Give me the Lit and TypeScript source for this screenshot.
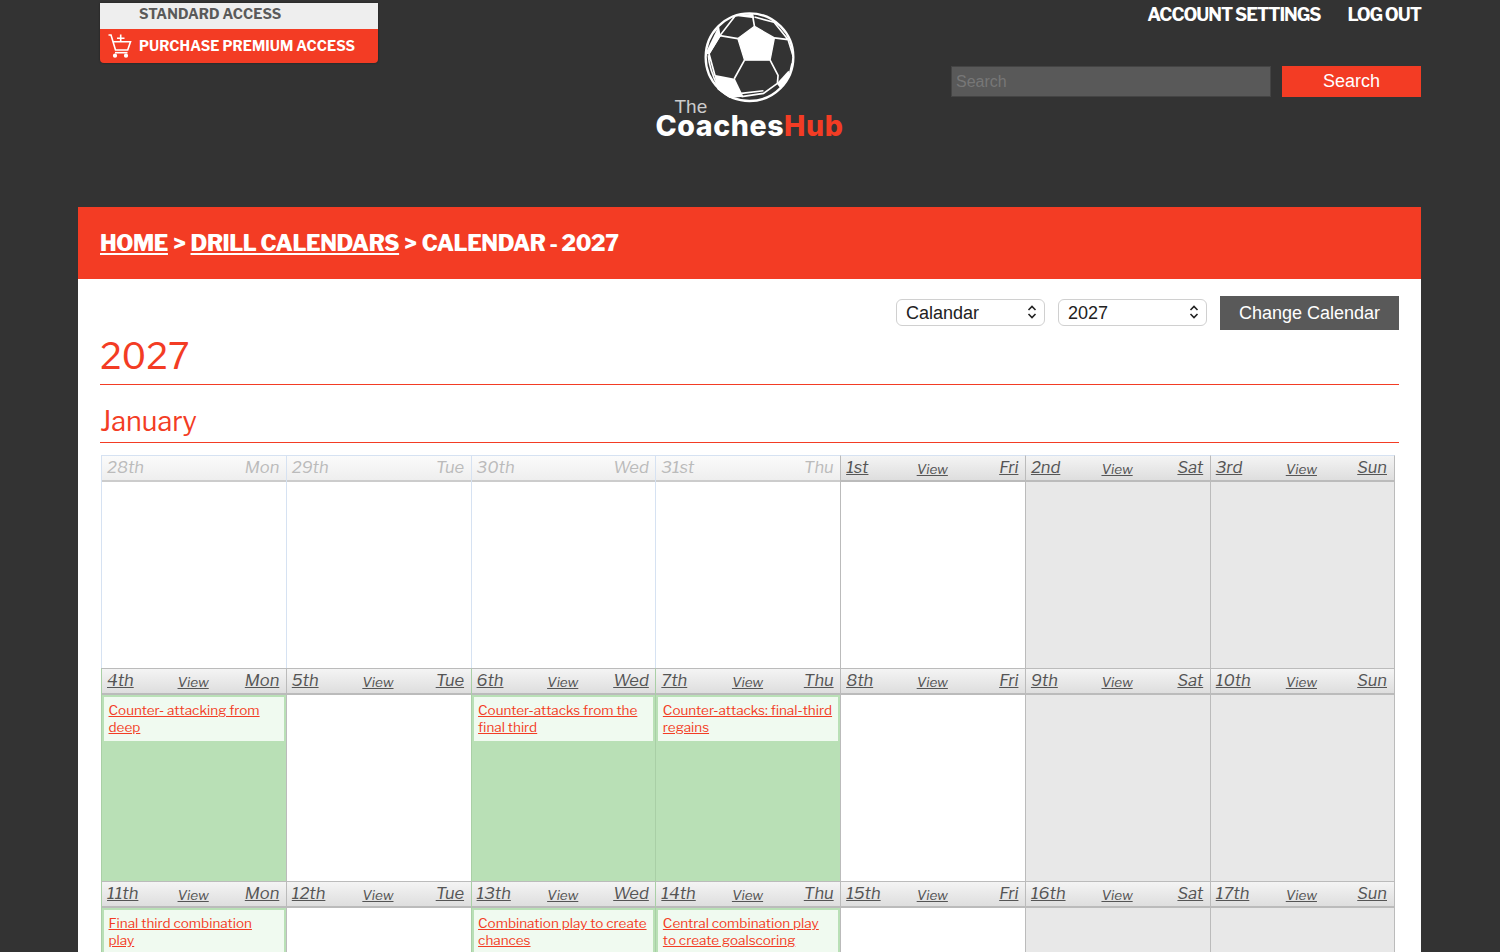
import { LitElement, html, css, svg } from 'lit';
import { customElement } from 'lit/decorators.js';

type Cell = { num: string; day: string; past?: boolean; tone?: 'green' | 'grey'; event?: string };

const DAYS = ['Mon', 'Tue', 'Wed', 'Thu', 'Fri', 'Sat', 'Sun'];

function week(nums: string[], events: (string | null)[], pastCount = 0): Cell[] {
  return nums.map((num, i) => ({
    num,
    day: DAYS[i],
    past: i < pastCount,
    tone: events[i] ? 'green' : i >= 5 ? 'grey' : undefined,
    event: events[i] ?? undefined,
  }));
}

const CELLS: Cell[] = [
  ...week(['28th', '29th', '30th', '31st', '1st', '2nd', '3rd'], [null, null, null, null, null, null, null], 4),
  ...week(['4th', '5th', '6th', '7th', '8th', '9th', '10th'], [
    'Counter- attacking from deep',
    null,
    'Counter-attacks from the final third',
    'Counter-attacks: final-third regains',
    null,
    null,
    null,
  ]),
  ...week(['11th', '12th', '13th', '14th', '15th', '16th', '17th'], [
    'Final third combination play',
    null,
    'Combination play to create chances',
    'Central combination play to create goalscoring opportunities',
    null,
    null,
    null,
  ]),
];

const ball = svg`
  <svg class="ball" viewBox="190 32 280 280" aria-hidden="true">
    <circle cx="330" cy="171" r="132" fill="none" stroke="#fff" stroke-width="7"/>
    <path fill="#fff" stroke="#fff" stroke-width="4" stroke-linejoin="round" d="M345 78 L405 113 L392 180 L315 180 L295 115 Z"/>
    <path fill="#fff" d="M196 162 L238 76 L243 108 L210 162 Z"/>
    <path fill="#fff" d="M224 224 L286 236 L312 290 L270 294 L234 268 Z"/>
    <path fill="#fff" d="M412 250 L447 212 L454 222 L424 266 Z"/>
    <path fill="#fff" d="M282 46 L340 40 L344 54 Z"/>
    <path fill="none" stroke="#fff" stroke-width="5" d="M345 78 L339 44 M295 115 L241 106 L286 48 M241 106 L208 160 L226 226 M315 180 L284 236 M392 180 L416 226 L414 250 M405 113 L446 118 L462 170 M446 118 L404 66 M306 290 L372 280 L414 250 M206 165 Q208 205 236 262 M345 50 L404 66 M305 280 L372 272 M452 216 L458 190"/>
  </svg>
`;

@customElement('app-root')
export class AppRoot extends LitElement {
  static styles = css`
    :host {
      display: block;
      height: 952px;
      overflow: hidden;
      background: #333;
      font-family: 'Liberation Sans', Arial, sans-serif;
    }
    .page { width: 1343px; margin-left: 78px; }

    .header {
      height: 207px;
      display: grid;
      grid-template-columns: 1fr auto 1fr;
    }
    .access {
      width: 278px;
      margin: 3px 0 0 22px;
      align-self: start;
      font-family: 'Libre Franklin', 'Roboto', sans-serif;
      font-weight: 700;
      font-size: 14px;
      letter-spacing: 0.08px;
      box-shadow: 0 0 2px rgba(0, 0, 0, 0.5);
      border-radius: 0 0 4px 4px;
    }
    .standard {
      box-sizing: border-box;
      height: 26px;
      padding: 0 0 5px 39px;
      display: flex;
      align-items: center;
      background: #eee;
      color: #5a5a5a;
    }
    .premium {
      box-sizing: border-box;
      height: 34px;
      display: flex;
      align-items: center;
      gap: 7px;
      padding: 0 0 1px 8px;
      background: #f33c24;
      color: #fff;
      border-radius: 0 0 4px 4px;
    }
    .cart { width: 24px; height: 24px; }

    .logo {
      display: flex;
      flex-direction: column;
      align-items: center;
      padding-top: 11px;
    }
    .ball { width: 93px; height: 93px; display: block; }
    .the {
      align-self: flex-start;
      margin: -4px 0 0 19px;
      color: #ccc;
      font-size: 19px;
      line-height: 14px;
    }
    .brand {
      font-family: 'Inter', sans-serif;
      font-weight: 800;
      font-size: 28.500px;
      line-height: 24px;
      letter-spacing: 0.6px;
      color: #fff;
    }
    .brand span { color: #f33c24; }

    .account { display: flex; flex-direction: column; align-items: flex-end; }
    .account-links {
      display: flex;
      gap: 27px;
      margin-top: 5px;
      font-family: 'Libre Franklin', 'Roboto', sans-serif;
      font-weight: 700;
      font-size: 18px;
      line-height: 20px;
      letter-spacing: -1px;
      color: #fff;
    }
    .search { display: flex; gap: 11px; margin-top: 41px; }
    .search input {
      box-sizing: border-box;
      width: 320px;
      height: 31px;
      padding: 0 4px;
      border: 1px solid #444;
      background: #595959;
      font: 16px 'Liberation Sans', Arial, sans-serif;
      color: #fff;
      outline: none;
    }
    .search input::placeholder { color: #777; }
    .search button {
      width: 139px;
      height: 31px;
      border: none;
      background: #f33c24;
      color: #fff;
      font: 18px 'Liberation Sans', Arial, sans-serif;
    }

    .crumbs {
      box-sizing: border-box;
      height: 72px;
      padding: 0 0 1px 22px;
      display: flex;
      align-items: center;
      gap: 5px;
      background: #f33c24;
      color: #fff;
      font-family: 'Libre Franklin', 'Roboto', sans-serif;
      font-weight: 800;
      font-size: 22px;
      letter-spacing: -0.4px;
    }
    .crumbs a { color: #fff; text-decoration: underline; }

    .content { background: #fff; padding: 17px 22px 0; height: 700px; }
    .controls { display: flex; justify-content: flex-end; align-items: center; height: 34px; }
    .select { position: relative; margin: 0 13px 1px 0; }
    .select select {
      appearance: none;
      width: 149px;
      height: 27px;
      display: block;
      padding: 0 9px;
      border: 1.5px solid #d0d0d0;
      border-radius: 6px;
      background: #fff;
      color: #222;
      font: 18px 'Liberation Sans', Arial, sans-serif;
    }
    .chev {
      position: absolute;
      right: 8px;
      top: 6px;
      width: 10px;
      height: 14px;
      pointer-events: none;
    }
    .change {
      width: 179px;
      height: 34px;
      border: none;
      background: #595959;
      color: #fff;
      font: 18px 'Liberation Sans', Arial, sans-serif;
    }

    h1, h2 { margin: 0; font-weight: 400; color: #f33c24; font-family: 'Libre Franklin', 'Roboto', sans-serif; border-bottom: 1px solid #f33c24; }
    h1 { font-size: 36px; line-height: 52px; padding-bottom: 2px; }
    h2 { font-size: 27px; line-height: 40px; margin-top: 17px; }

    .cal {
      width: 1293.500px;
      margin: 12px 0 0 1px;
      display: grid;
      grid-template-columns: repeat(7, 1fr);
      grid-auto-rows: 213px;
    }
    .cell {
      box-sizing: border-box;
      display: flex;
      flex-direction: column;
      border-left: 1px solid #bbb;
      border-top: 1px solid #bbb;
      font-family: 'Libre Franklin', 'Roboto', sans-serif;
    }
    .cell:nth-child(7n) { border-right: 1px solid #bbb; }
    .cell.past { border-color: #d6e2f2; }
    .cell.first-row { border-top-color: #d6e2f2; }
    .cell.green { background: #b9e0b6; border-left-color: #a9cfa6; }
    .cell.grey { background: #e8e8e8; }
    .day-head {
      box-sizing: border-box;
      height: 26px;
      padding: 0 6.500px 1.500px 5px;
      display: grid;
      grid-template-columns: 1fr auto 1fr;
      align-items: center;
      background: linear-gradient(#f4f4f4, #dedede);
      border-bottom: 2px solid #bbb;
      color: #555;
      font-size: 16.500px;
      font-style: italic;
    }
    .day-head a { color: #555; text-decoration: underline; }
    .day-head .view { font-size: 13.500px; padding-top: 3px; }
    .day-head .dow { text-align: right; }
    .past .day-head {
      background: linear-gradient(#fbfbfb, #eee);
      border-bottom-color: #ccc;
      color: #bbb;
    }
    .event {
      margin: 2px;
      padding: 5px 4px 5px 4.500px;
      background: #f0faf0;
      font-size: 13.500px;
      line-height: 17px;
    }
    .event a { color: #f33c24; text-decoration: underline; }
  `;

  private renderCell(c: Cell, i: number) {
    const classes = ['cell', c.past ? 'past' : '', c.tone ?? '', i < 7 ? 'first-row' : ''].join(' ');
    return html`
      <div class=${classes}>
        <div class="day-head">
          ${c.past
            ? html`<span>${c.num}</span><span></span><span class="dow">${c.day}</span>`
            : html`<span><a href="#">${c.num}</a></span>
                <a class="view" href="#">View</a>
                <span class="dow"><a href="#">${c.day}</a></span>`}
        </div>
        ${c.event ? html`<div class="event"><a href="#">${c.event}</a></div>` : ''}
      </div>
    `;
  }

  render() {
    return html`
      <div class="page">
        <header class="header">
          <div class="access">
            <div class="standard">STANDARD ACCESS</div>
            <div class="premium">
              <svg class="cart" viewBox="0 0 24 24" fill="none" stroke="#fff" stroke-width="1.600">
                <path d="M0.500 1 H3 L7.500 16 H19.700 L22.500 7.700 H5"/>
                <path d="M7 18.700 H19.500"/>
                <path d="M12.700 0.500 V8 M9 4.300 H16.500"/>
                <circle cx="7" cy="21.700" r="1.300" fill="#fff"/>
                <circle cx="18" cy="21.700" r="1.300" fill="#fff"/>
              </svg>
              PURCHASE PREMIUM ACCESS
            </div>
          </div>
          <div class="logo">
            ${ball}
            <div class="the">The</div>
            <div class="brand">Coaches<span>Hub</span></div>
          </div>
          <div class="account">
            <div class="account-links"><span>ACCOUNT SETTINGS</span><span>LOG OUT</span></div>
            <div class="search">
              <input placeholder="Search" />
              <button>Search</button>
            </div>
          </div>
        </header>
        <div class="crumbs">
          <a href="#">HOME</a><span>&gt;</span><a href="#">DRILL CALENDARS</a><span>&gt;</span><span>CALENDAR - 2027</span>
        </div>
        <main class="content">
          <div class="controls">
            ${['Calandar', '2027'].map(
              (v) => html`
                <div class="select">
                  <select><option>${v}</option></select>
                  <svg class="chev" viewBox="0 0 10 14" fill="none" stroke="#222" stroke-width="1.600">
                    <path d="M1.500 5 L5 1.500 L8.500 5M1.500 9 L5 12.500 L8.500 9"/>
                  </svg>
                </div>
              `
            )}
            <button class="change">Change Calendar</button>
          </div>
          <h1>2027</h1>
          <h2>January</h2>
          <div class="cal">${CELLS.map((c, i) => this.renderCell(c, i))}</div>
        </main>
      </div>
    `;
  }
}
